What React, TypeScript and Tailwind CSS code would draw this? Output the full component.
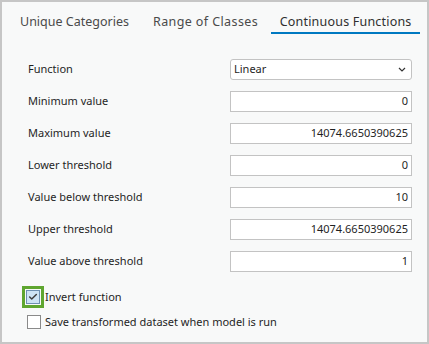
import { Check } from "lucide-react";

interface Field {
  label: string;
  value: string;
}

const fields: Field[] = [
  { label: "Minimum value", value: "0" },
  { label: "Maximum value", value: "14074.6650390625" },
  { label: "Lower threshold", value: "0" },
  { label: "Value below threshold", value: "10" },
  { label: "Upper threshold", value: "14074.6650390625" },
  { label: "Value above threshold", value: "1" },
];

const font = { fontFamily: '"Noto Sans", "Open Sans", sans-serif' };

export default function App() {
  return (
    <div
      className="h-[344px] w-[429px] border-2 border-[#c6c6c6] bg-[#f8f9f9] text-[11px] text-[#1f1f1f]"
      style={font}
    >
      {/* Tabs */}
      <div className="flex h-[32px] items-end whitespace-nowrap pl-[16px] text-[12.5px] text-[#4a4a4a]">
        <div className="px-[2px] pb-[3px] leading-[18px]">Unique Categories</div>
        <div className="ml-[20px] px-[2px] pb-[3px] leading-[18px] tracking-[0.4px]">Range of Classes</div>
        <div className="ml-[11px] w-[149px] border-b-2 border-[#0079c1] pb-[1px] text-center leading-[18px] tracking-[0.2px] text-[#2f2f2f]">
          Continuous Functions
        </div>
      </div>

      {/* Form */}
      <div className="flex flex-col gap-[12px] pl-[26px] pr-[15px] pt-[25px]">
        <div className="flex h-[20px] items-center justify-between">
          <span>Function</span>
          <div className="flex h-[21px] w-[182px] items-center justify-between rounded-[3px] border border-[#c3c3c3] bg-white pl-[3px] pr-[5px]">
            <span>Linear</span>
            <svg width="8" height="5" viewBox="0 0 8 5" fill="none">
              <path d="M1 1l3 3 3-3" stroke="#333" strokeWidth="1.2" />
            </svg>
          </div>
        </div>
        {fields.map((f) => (
          <div key={f.label} className="flex h-[20px] items-center justify-between">
            <span>{f.label}</span>
            <div className="flex h-[21px] w-[182px] items-center justify-end border border-[#c3c3c3] bg-white pr-[3px]">
              {f.value}
            </div>
          </div>
        ))}
      </div>

      {/* Checkboxes */}
      <div className="mt-[15px] flex flex-col gap-[6px] pl-[20px]">
        <div className="flex items-center">
          <div className="flex size-[22px] items-center justify-center border-[3px] border-[#5fa630]">
            <div className="flex size-[14px] items-center justify-center border border-[#6d8fb1] bg-[#cde3f5]">
              <Check className="size-[10px] text-[#3d3d3d]" strokeWidth={3.5} />
            </div>
          </div>
          <span className="ml-[1px]">Invert function</span>
        </div>
        <div className="flex items-center pl-[5px]">
          <div className="size-[14px] border border-[#8a8a8a] bg-white" />
          <span className="ml-[4px]">Save transformed dataset when model is run</span>
        </div>
      </div>
    </div>
  );
}
